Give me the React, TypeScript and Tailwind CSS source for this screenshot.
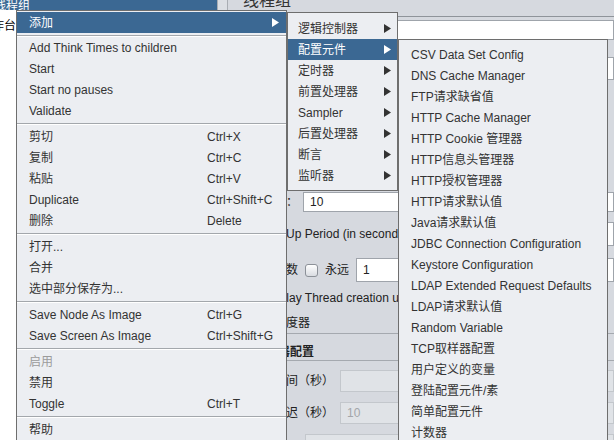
import React from 'react';

type Row =
  | { label: string; shortcut?: string; arrow?: boolean; active?: boolean; disabled?: boolean }
  | 'sep'
  | 'sep4';

const mainItems: Row[] = [
  { label: '添加', arrow: true, active: true },
  'sep4',
  { label: 'Add Think Times to children' },
  { label: 'Start' },
  { label: 'Start no pauses' },
  { label: 'Validate' },
  'sep',
  { label: '剪切', shortcut: 'Ctrl+X' },
  { label: '复制', shortcut: 'Ctrl+C' },
  { label: '粘贴', shortcut: 'Ctrl+V' },
  { label: 'Duplicate', shortcut: 'Ctrl+Shift+C' },
  { label: '删除', shortcut: 'Delete' },
  'sep',
  { label: '打开...' },
  { label: '合并' },
  { label: '选中部分保存为...' },
  'sep',
  { label: 'Save Node As Image', shortcut: 'Ctrl+G' },
  { label: 'Save Screen As Image', shortcut: 'Ctrl+Shift+G' },
  'sep',
  { label: '启用', disabled: true },
  { label: '禁用' },
  { label: 'Toggle', shortcut: 'Ctrl+T' },
  'sep',
  { label: '帮助' },
];

const addItems = [
  { label: '逻辑控制器' },
  { label: '配置元件', active: true },
  { label: '定时器' },
  { label: '前置处理器' },
  { label: 'Sampler' },
  { label: '后置处理器' },
  { label: '断言' },
  { label: '监听器' },
];

const configItems = [
  'CSV Data Set Config',
  'DNS Cache Manager',
  'FTP请求缺省值',
  'HTTP Cache Manager',
  'HTTP Cookie 管理器',
  'HTTP信息头管理器',
  'HTTP授权管理器',
  'HTTP请求默认值',
  'Java请求默认值',
  'JDBC Connection Configuration',
  'Keystore Configuration',
  'LDAP Extended Request Defaults',
  'LDAP请求默认值',
  'Random Variable',
  'TCP取样器配置',
  '用户定义的变量',
  '登陆配置元件/素',
  '简单配置元件',
  '计数器',
];

function Arrow({ className }: { className?: string }) {
  return (
    <svg width="7" height="9" viewBox="0 0 7 9" className={className}>
      <polygon points="0,0 7,4.5 0,9" fill="currentColor" />
    </svg>
  );
}

function Separator({ small }: { small?: boolean }) {
  return (
    <div className={`${small ? 'h-[4px]' : 'h-[5px]'} pt-[2px]`}>
      <div className="h-px bg-[#a3a7ac]" />
      <div className="h-px bg-white" />
    </div>
  );
}

function Checkbox() {
  return <div className="w-[13px] h-[13px] rounded-[3px] border border-[#8c9198] bg-gradient-to-b from-white to-[#d9dce1] shrink-0" />;
}

function Background() {
  return (
    <div className="flex w-full h-full">
      {/* tree */}
      <div className="w-[217px] shrink-0 bg-white">
        <div className="h-[10px] bg-[#3b6893] overflow-hidden flex items-end">
          <span className="-ml-[6px] -mb-[3px] leading-[14px] text-white whitespace-nowrap">线程组</span>
        </div>
        <div className="h-[7px]" />
        <div className="h-[18px] flex items-center">
          <span className="-ml-[20px] text-black whitespace-nowrap">工作台</span>
        </div>
      </div>
      {/* split divider */}
      <div className="w-[11px] shrink-0 bg-[#dcdfe4] border-l border-r border-[#a9adb3]" />
      {/* right panel */}
      <div className="flex-1 bg-[#d6d9df] pl-[22px] text-[#222]">
        <div className="h-[16px] overflow-hidden -ml-[22px] pl-[15px]">
          <div className="text-[16px] leading-[16px] -mt-[7px] whitespace-nowrap text-[#333]">线程组</div>
        </div>
        <div className="h-px bg-[#8f949a] -ml-[22px]" />
        <div className="h-[3px]" />
        <div className="h-[20px] flex">
          <span className="w-[37px] shrink-0 leading-[20px]">名称：</span>
          <div className="flex-1 bg-white border border-[#9fa4ab]" />
        </div>
        <div className="h-[17px]" />
        <div className="h-[23px] flex">
          <span className="w-[37px] shrink-0 leading-[23px]">注释：</span>
          <div className="flex-1 bg-white border border-[#9fa4ab]" />
        </div>
        <div className="h-[112px]" />
        {/* thread count */}
        <div className="h-[20px] flex items-center">
          <span className="whitespace-nowrap">线程数：</span>
          <div className="ml-[5px] flex-1 h-[20px] bg-white border border-[#9fa4ab] flex items-center pl-[6px]">10</div>
        </div>
        <div className="h-[10px]" />
        <div className="h-[24px] flex items-center">
          <span className="whitespace-nowrap">Ramp-Up Period (in seconds):</span>
          <div className="ml-[5px] flex-1 h-[24px] bg-white border border-[#9fa4ab]" />
        </div>
        <div className="h-[12px]" />
        <div className="h-[24px] flex items-center">
          <span className="whitespace-nowrap">循环次数</span>
          <div className="ml-[7px]">
            <Checkbox />
          </div>
          <span className="ml-[7px] whitespace-nowrap">永远</span>
          <div className="ml-[7px] flex-1 h-[24px] bg-white border border-[#9fa4ab] flex items-center pl-[6px]">1</div>
        </div>
        <div className="h-[6px]" />
        <div className="h-[20px] flex items-center">
          <Checkbox />
          <span className="ml-[8px] whitespace-nowrap">Delay Thread creation until needed</span>
        </div>
        <div className="h-[5px]" />
        <div className="h-[20px] flex items-center">
          <Checkbox />
          <span className="ml-[11px] whitespace-nowrap">调度器</span>
        </div>
        <div className="h-px bg-[#a5a9af]" />
        <div className="h-[26px] pt-[12px] pl-[4px] leading-[12px] font-bold whitespace-nowrap">调度器配置</div>
        <div className="h-px bg-[#a5a9af]" />
        <div className="h-[9px]" />
        <div className="h-[22px] flex items-center">
          <span className="whitespace-nowrap w-[90px] shrink-0">持续时间（秒）</span>
          <div className="flex-1 h-[22px] bg-[#e0e3e7] border border-[#c3c7cc]" />
        </div>
        <div className="h-[10px]" />
        <div className="h-[22px] flex items-center">
          <span className="whitespace-nowrap w-[90px] shrink-0">启动延迟（秒）</span>
          <div className="flex-1 h-[22px] bg-[#e0e3e7] border border-[#c3c7cc] flex items-center pl-[6px] text-[#a3a6aa]">10</div>
        </div>
        <div className="h-[10px]" />
        <div className="h-[22px] flex items-center pl-[55px]">
          <div className="flex-1 h-[22px] bg-[#e0e3e7] border border-[#c3c7cc]" />
        </div>
      </div>
    </div>
  );
}

export default function App() {
  return (
    <div className="relative w-[614px] h-[440px] overflow-hidden text-[12px] font-['Liberation_Sans','Noto_Sans_CJK_SC',sans-serif]">
      <Background />

      {/* main context menu */}
      <div className="absolute left-[16px] top-[10px] w-[271px] bg-[#eceef2] border border-[#6e6e6e] pt-px">
        {mainItems.map((it, i) => {
          if (it === 'sep') return <Separator key={i} />;
          if (it === 'sep4') return <Separator key={i} small />;
          const color = it.active ? 'bg-[#3b6893] text-white' : it.disabled ? 'text-[#9b9b9b]' : 'text-[#333]';
          return (
            <div key={i} className={`h-[21px] flex items-center pl-[12px] pr-[7px] ${color}`}>
              <span className="w-[178px] shrink-0 whitespace-nowrap">{it.label}</span>
              {it.shortcut && <span className="whitespace-nowrap">{it.shortcut}</span>}
              {it.arrow && <Arrow className="ml-auto" />}
            </div>
          );
        })}
      </div>

      {/* 添加 submenu */}
      <div className="absolute left-[287px] top-[12px] w-[111px] bg-[#eceef2] border border-[#6e6e6e] pt-[5px] pb-[4px]">
        {addItems.map((it, i) => (
          <div
            key={i}
            className={`h-[21px] flex items-center justify-between pl-[10px] pr-[6px] ${it.active ? 'bg-[#3b6893] text-white' : 'text-[#333]'}`}
          >
            <span className="whitespace-nowrap">{it.label}</span>
            <Arrow />
          </div>
        ))}
      </div>

      {/* 配置元件 submenu */}
      <div className="absolute left-[398px] top-[39px] w-[210px] bg-[#eceef2] border border-[#6e6e6e] pt-[4px] pb-[4px]">
        {configItems.map((t, i) => (
          <div key={i} className="h-[21px] flex items-center pl-[12px] text-[#333] whitespace-nowrap">
            {t}
          </div>
        ))}
      </div>
    </div>
  );
}
